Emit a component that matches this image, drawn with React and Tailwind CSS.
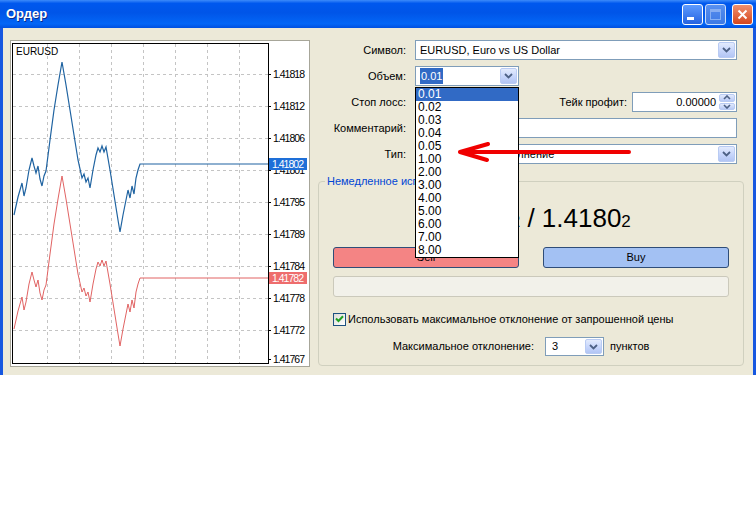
import React from "react";

const font = "font-['Liberation_Sans',Arial,sans-serif]";

const levels = [
  [74, "1.41818"],
  [106, "1.41812"],
  [138, "1.41806"],
  [170, "1.41801"],
  [202, "1.41795"],
  [234, "1.41789"],
  [266, "1.41784"],
  [298, "1.41778"],
  [330, "1.41772"],
  [359, "1.41767"],
];
const gridX = [47, 79, 111, 143, 175, 207, 239];
const volumes = ["0.01", "0.02", "0.03", "0.04", "0.05", "1.00", "2.00", "3.00", "4.00", "5.00", "6.00", "7.00", "8.00"];

// price path in page coordinates, red one is the same shifted down
const pricePath =
  "M14,215 L18,197 L20,190 L22,183 L24,196 L26,188 L29,170 L32,158 L34,166 L36,173 L38,166 L40,179 L42,186 L44,176 L46,171 L50,140 L54,110 L58,85 L62,62 L66,85 L70,110 L74,135 L78,160 L82,178 L84,174 L86,182 L88,178 L90,188 L93,170 L96,155 L98,148 L100,152 L102,146 L104,152 L106,147 L110,170 L114,195 L118,220 L120,232 L123,215 L126,200 L128,190 L130,198 L132,186 L134,194 L136,178 L138,170 L140,164 L268,164";

const Chevron = () => (
  <svg width="9" height="6" viewBox="0 0 9 6">
    <path d="M1 1 L4.5 4.5 L8 1" fill="none" stroke="#4D6185" strokeWidth="1.8" />
  </svg>
);

const ComboButton = () => (
  <span className="flex items-center justify-center w-[17px] h-full rounded-[2px] border border-[#B9CBF3] bg-[linear-gradient(#E3EBFD,#C6D5FB_55%,#B2C5F4)]">
    <Chevron />
  </span>
);

const Combo = ({ width, children }) => (
  <div
    className={`flex items-stretch h-[20px] border border-[#7F9DB9] bg-white p-[1px] ${width}`}
  >
    <div className="flex-1 flex items-center pl-[3px] overflow-hidden whitespace-nowrap">
      {children}
    </div>
    <ComboButton />
  </div>
);

const Spinner = () => (
  <span className="flex flex-col w-[16px] h-full gap-[1px]">
    {["M1 4 L4 1 L7 4", "M1 1 L4 4 L7 1"].map((d) => (
      <span
        key={d}
        className="flex-1 flex items-center justify-center rounded-[2px] border border-[#B9CBF3] bg-[linear-gradient(#E3EBFD,#B8CAF6)]"
      >
        <svg width="8" height="5" viewBox="0 0 8 5">
          <path d={d} fill="none" stroke="#4D6185" strokeWidth="1.6" />
        </svg>
      </span>
    ))}
  </span>
);

const Chart = () => (
  <div className="w-[300px] h-[327px] border border-[#A7A699] bg-white">
    <svg width="298" height="325" viewBox="11 41 298 325" className={font}>
      {gridX.map((x) => (
        <line key={x} x1={x + 0.5} y1={44} x2={x + 0.5} y2={363} stroke="#C4C4C4" strokeDasharray="3 3" />
      ))}
      {levels.slice(0, 9).map(([y]) => (
        <line key={y} x1={13} y1={y + 0.5} x2={268} y2={y + 0.5} stroke="#C4C4C4" strokeDasharray="3 3" />
      ))}
      <rect x="12.5" y="43.5" width="256" height="320" fill="none" stroke="#000" />
      <text x="16" y="55" fontSize="10" fill="#000">EURUSD</text>
      <path d={pricePath} fill="none" stroke="#1F63A1" strokeWidth="1.2" />
      <path d={pricePath} transform="translate(0,114)" fill="none" stroke="#E16363" strokeWidth="1" />
      {levels.map(([y, label]) => (
        <g key={label}>
          <line x1={268} y1={y + 0.5} x2={271} y2={y + 0.5} stroke="#000" />
          <text x="273" y={y + 4} fontSize="10.5" textLength="32" fill="#000">
            {label}
          </text>
        </g>
      ))}
      <rect x="269" y="158" width="38" height="12" fill="#1E6FD8" />
      <text x="272" y="168" fontSize="10.5" textLength="32" fill="#fff">1.41802</text>
      <rect x="269" y="272" width="38" height="12" fill="#EE6D6D" />
      <text x="272" y="282" fontSize="10.5" textLength="32" fill="#fff">1.41782</text>
    </svg>
  </div>
);

const Label = ({ children, className = "w-[88px]" }) => (
  <span className={`text-right shrink-0 ${className}`}>{children}</span>
);

const TitleButton = ({ children, tone }) => (
  <span
    className={`flex items-center justify-center w-[21px] h-[21px] rounded-[3px] border border-white ${tone}`}
  >
    {children}
  </span>
);

export default function App() {
  return (
    <div className={`w-[756px] h-[512px] bg-white text-[11px] text-black ${font}`}>
      <div className="w-[756px] h-[375px] flex flex-col">
        {/* title bar */}
        <div className="h-[28px] flex items-center pl-[6px] pr-[3px] bg-[linear-gradient(#3D8BFA,#0058EE_12%,#0055E8_45%,#0366F6_85%,#0050E0_100%)]">
          <span className="text-white font-bold text-[13px] [text-shadow:1px_1px_#0A2C8C]">Ордер</span>
          <div className="ml-auto flex gap-[2px] items-center">
            <TitleButton tone="bg-[linear-gradient(#5D9BFF,#2663E0)]">
              <span className="w-[7px] h-[3px] bg-white mt-[9px] mr-[5px]" />
            </TitleButton>
            <TitleButton tone="bg-[linear-gradient(#6E9FF2,#4C7FE2)] border-[#A8C4F5] opacity-80">
              <span className="w-[11px] h-[11px] border border-[#A8C4F5] border-t-[3px]" />
            </TitleButton>
            <span className="w-[2px]" />
            <TitleButton tone="bg-[linear-gradient(#F0906E,#D5471E)]">
              <svg width="11" height="11" viewBox="0 0 11 11">
                <path d="M1.5 1.5 L9.5 9.5 M9.5 1.5 L1.5 9.5" stroke="#fff" strokeWidth="2" />
              </svg>
            </TitleButton>
          </div>
        </div>

        {/* body */}
        <div className="relative flex-1 flex bg-[#ECE9D8] border-x-[3px] border-[#1657E0] pl-[7px] pt-[12px]">
          <Chart />

          <div className="ml-[8px] w-[426px] flex flex-col">
            <div className="flex flex-col gap-[6px]">
              <div className="flex items-center h-[20px]">
                <Label>Символ:</Label>
                <div className="ml-[9px]">
                  <Combo width="w-[322px]">EURUSD, Euro vs US Dollar</Combo>
                </div>
              </div>

              <div className="flex items-center h-[20px]">
                <Label>Объем:</Label>
                <div className="ml-[9px] relative z-20">
                  <Combo width="w-[104px]">
                    <span className="bg-[#316AC5] text-white px-[1px]">0.01</span>
                  </Combo>
                  <ul className="absolute left-0 top-full mt-[1px] w-[104px] border border-black bg-white text-[12px]">
                    {volumes.map((v, i) => (
                      <li
                        key={v}
                        className={`h-[13px] leading-[13px] pl-[2px] ${i === 0 ? "bg-[#316AC5] text-white" : ""}`}
                      >
                        {v}
                      </li>
                    ))}
                  </ul>
                </div>
              </div>

              <div className="flex items-center h-[20px]">
                <Label>Стоп лосс:</Label>
                <div className="ml-[9px] flex h-[20px] w-[100px] border border-[#7F9DB9] bg-white p-[1px]">
                  <span className="flex-1" />
                  <Spinner />
                </div>
                <Label className="w-[112px]">Тейк профит:</Label>
                <div className="ml-[5px] flex items-center h-[20px] w-[105px] border border-[#7F9DB9] bg-white p-[1px]">
                  <span className="flex-1 text-right pr-[3px]">0.00000</span>
                  <Spinner />
                </div>
              </div>

              <div className="flex items-center h-[20px]">
                <Label>Комментарий:</Label>
                <div className="ml-[9px] w-[322px] h-[20px] border border-[#7F9DB9] bg-white" />
              </div>

              <div className="flex items-center h-[20px]">
                <Label>Тип:</Label>
                <div className="ml-[9px]">
                  <Combo width="w-[322px]">Немедленное исполнение</Combo>
                </div>
              </div>
            </div>

            <fieldset className="mt-[10px] h-[192px] w-[426px] border border-[#D0D0BF] rounded-[4px] p-0 m-0">
              <legend className="ml-[6px] px-[2px] leading-[14px] text-[#0046D5]">Немедленное исполнение</legend>
              <div className="flex flex-col">
                <div className="mt-[17px] h-[26px] flex items-center justify-center text-[26px] leading-none">
                  <span>
                    1.4178<span className="text-[17px]">2</span> / 1.4180<span className="text-[17px]">2</span>
                  </span>
                </div>
                <div className="mt-[16px] px-[14px] flex gap-[24px]">
                  <button className="w-[186px] h-[21px] rounded-[3px] border border-[#2F4D78] bg-[#F48484]">Sell</button>
                  <button className="w-[186px] h-[21px] rounded-[3px] border border-[#2F4D78] bg-[#A3C1F3]">Buy</button>
                </div>
                <div className="mt-[8px] mx-[14px] h-[21px] rounded-[3px] border border-[#CBC9BB] bg-[#F2F1EA]" />
                <div className="mt-[15px] h-[14px] pl-[14px] flex items-center gap-[2px]">
                  <span className="w-[13px] h-[13px] border border-[#1C5180] bg-[linear-gradient(135deg,#DCDCD7,#FFFFFF)] flex items-center justify-center">
                    <svg width="9" height="8" viewBox="0 0 9 8">
                      <path d="M1 3.5 L3.5 6 L8 1.2" fill="none" stroke="#21A121" strokeWidth="2" />
                    </svg>
                  </span>
                  <span>Использовать максимальное отклонение от запрошенной цены</span>
                </div>
                <div className="mt-[11px] h-[19px] flex items-center">
                  <Label className="w-[215px]">Максимальное отклонение:</Label>
                  <div className="ml-[11px]">
                    <div className="flex items-stretch h-[19px] w-[59px] border border-[#7F9DB9] bg-white p-[1px]">
                      <span className="flex-1 flex items-center pl-[5px]">3</span>
                      <ComboButton />
                    </div>
                  </div>
                  <span className="ml-[6px]">пунктов</span>
                </div>
              </div>
            </fieldset>
          </div>

          {/* red arrow drawn over the dialog */}
          <svg
            className="absolute left-[449px] top-[108px] z-30"
            width="184"
            height="34"
            viewBox="449 136 184 34"
          >
            <path
              d="M626,152 L457,152 M457,152 L485,144 M457,152 L484,160"
              fill="none"
              stroke="#F00000"
              strokeWidth="4"
              strokeLinecap="round"
            />
          </svg>
        </div>
      </div>
    </div>
  );
}
